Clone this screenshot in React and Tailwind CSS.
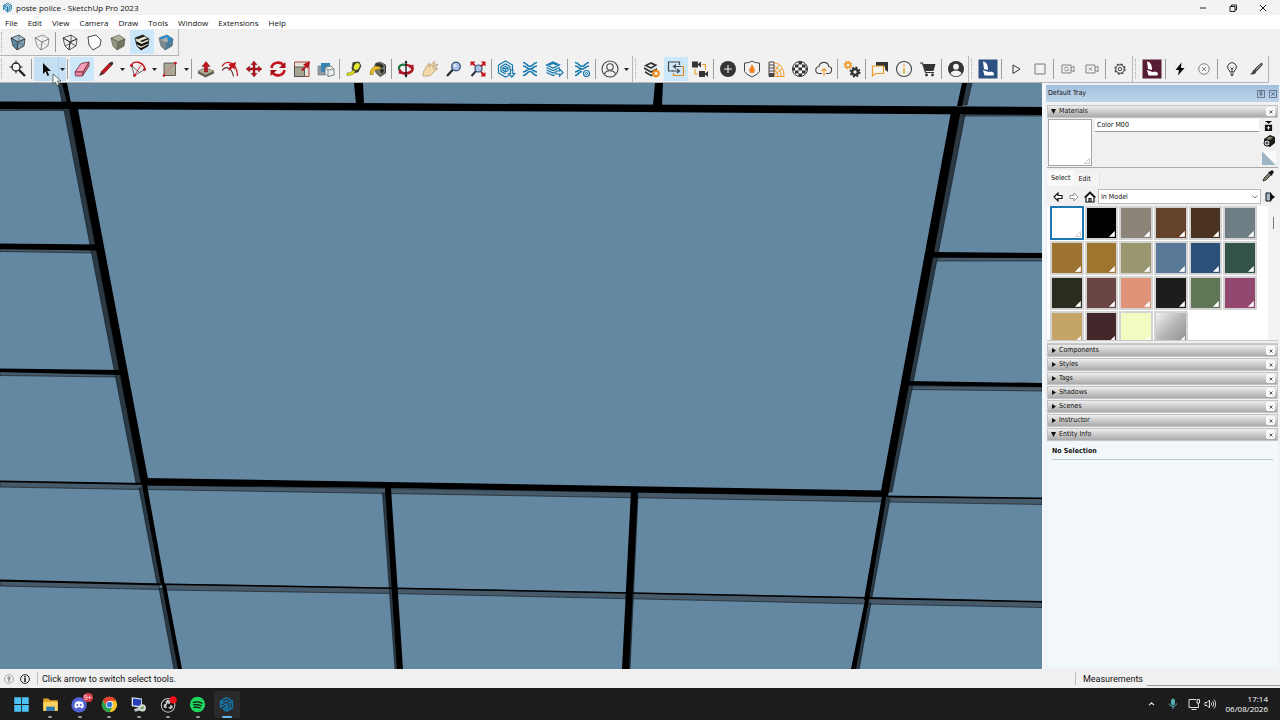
import { useState } from 'react';
import clsx from 'clsx';

const MENUS = ['File', 'Edit', 'View', 'Camera', 'Draw', 'Tools', 'Window', 'Extensions', 'Help'];

const SWATCHES = [
  '#ffffff', '#000000', '#8c8379', '#64432a', '#49321f', '#6f7d85',
  '#9c7330', '#9d752f', '#98976f', '#587a98', '#2c5179', '#315446',
  '#2a2c20', '#6b4544', '#df9479', '#1d1d1e', '#617655', '#93486f',
  '#c5a567', '#43272a', '#f3fbc3', 'metal',
];

const CLOSED_PANELS = ['Components', 'Styles', 'Tags', 'Shadows', 'Scenes', 'Instructor'];

// ── Icons ─────────────────────────────────────────────────────
// All toolbar glyphs share one 20 x 20 grid.

function Glyph({ children, className = 'size-5' }) {
  return (
    <svg viewBox="0 0 20 20" className={clsx('shrink-0', className)} fill="none" aria-hidden="true">
      {children}
    </svg>
  );
}

function SketchUpLogo({ className }) {
  return (
    <Glyph className={className}>
      <g stroke="#1478ad" strokeWidth="1.7" strokeLinejoin="round">
        <path d="M3 14.5V6l7-4 7 4v8l-7 4" />
        <path d="M3 9.5 10 5.5l4 2.4v5l-4 2.3" />
        <path d="M3 13 10 9l1 .8v2.4L6 15l4 3" />
        <path d="M10 9v9M3 6l4 2.2M14 8l3-2" />
      </g>
    </Glyph>
  );
}

const BOX = 'M4 5 12 3l5 5-1 6-7 4-4-5z';

function Cube({ top, left, right, line = '#333' }) {
  return (
    <g stroke={line} strokeWidth=".8" strokeLinejoin="round">
      <path d="M3 6 11 3l6 4-7 3z" fill={top} />
      <path d="m3 6 7 4-1 8-4-4z" fill={left} />
      <path d="m10 10 7-3-1 7-7 4z" fill={right} />
    </g>
  );
}

const ICONS = {
  xray: <><Cube top="#a9c2d0" left="#5f8aa3" right="#7fa1b5" /><path d="m5 14 6-3 5 3M11 11V3" stroke="#4c6b7c" strokeWidth=".7" /></>,
  backEdges: <><Cube top="#f7f7f7" left="#f2f2f2" right="#f2f2f2" line="#777" /><path d="m5 14 6-3 5 3M11 11V3" stroke="#999" strokeWidth=".7" strokeDasharray="1.5 1" /></>,
  wire: <><Cube top="none" left="none" right="none" /><path d="m5 14 6-3 5 3M11 11V3" stroke="#333" strokeWidth=".8" /></>,
  hidden: <path d={BOX} fill="#fcfcfc" stroke="#333" strokeWidth=".9" />,
  shaded: <Cube top="#aeb09c" left="#94967f" right="#74765f" line="#66685a" />,
  textured: (
    <>
      <path d="M3 6 11 3l6 4-1 7-7 4-4-4z" fill="#dfe2cd" stroke="#222" strokeWidth=".8" />
      <path d="m3.500 6 7.500-3 2 1.300-7.500 3zM8 9l8-3 1 1-7 3zM4 9l5.500 3 7-3-.3 2.500-7 3L4.500 12zM5 14l4 2 7-3.500V14l-7 4z" fill="#111" />
    </>
  ),
  mono: (
    <>
      <path d="m3 6 8-3 6 4-1 7-7 4-4-4z" fill="#b5ac9c" stroke="#555" strokeWidth=".7" />
      <path d="m3 6 8-3 6 4-1 7z" fill="#248dd0" />
      <path d="m10 10 7-3-1 7-7 4z" fill="#4d7d98" />
      <path d="m3 6 7 4-1 8-4-4z" fill="#7a8a92" />
      <path d="m5 8 6-3 1 5-2 0z" fill="#b9b0a1" />
    </>
  ),
  zoomSel: (
    <>
      <circle cx="8" cy="8" r="4" stroke="#222" strokeWidth="1.300" fill="#f8f8f8" />
      <path d="M8 1.500v3M8 11.500v3M1.500 8h3M11.500 8h3" stroke="#222" strokeWidth="1" />
      <path d="m11 11 6 6" stroke="#222" strokeWidth="2.400" />
    </>
  ),
  arrow: <path d="M7 4v11l2.600-2.500L11.500 17l1.700-.8-2-4.200H15z" fill="#0a0a0a" />,
  eraser: (
    <g stroke="#7c3446" strokeWidth=".9" strokeLinejoin="round">
      <path d="m3 13 6-8.500 8-1.500-6 10z" fill="#f4a0b8" />
      <path d="m3 13h8l-.500 4H3.500z" fill="#e887a4" />
      <path d="m11 13 6-10v4l-6.500 10z" fill="#c9677f" />
    </g>
  ),
  pencil: (
    <>
      <path d="m5 13 9-9.500 2.500 2L7.500 15z" fill="#c3131c" stroke="#5b1015" strokeWidth=".6" />
      <path d="m5 13 2.500 2L3 17z" fill="#222" />
      <path d="m13 4.500 2.500 2 2-2.500-1.500-1.500z" fill="#333" />
    </>
  ),
  arc: (
    <g strokeWidth="1">
      <path d="M3.500 6.500 6.500 16.500 16.500 10.500M3.500 6.500l8 7" stroke="#666" />
      <path d="M3 7C5 1 15 2 17 10" stroke="#c3131c" strokeWidth="1.300" />
      <path d="m6.500 16.500 7-11" stroke="#c3131c" strokeWidth=".8" />
      <g fill="#c3131c"><circle cx="3.500" cy="6.500" r="1.400" /><circle cx="16.500" cy="10.500" r="1.400" /><circle cx="6.500" cy="16.500" r="1.400" /></g>
    </g>
  ),
  rect: (
    <>
      <path d="M4 4h11.500v12.500H4z" fill="#aaa796" stroke="#55534a" strokeWidth=".9" />
      <path d="m4 16 11-12" stroke="#d27068" strokeWidth=".9" />
      <g fill="#c3131c"><circle cx="15.500" cy="4" r="1.300" /><circle cx="4" cy="16.500" r="1.300" /></g>
    </>
  ),
  push: (
    <>
      <path d="m2 12 7.500-3.500L18 12l-8.500 4z" fill="#b2ae98" stroke="#666454" strokeWidth=".6" />
      <path d="m2 12 7.500 4v2.500L2 14.500zM9.500 16l8.500-4v2.500l-8.500 4z" fill="#646352" />
      <path d="M8.500 13V7.500H6L10 2.500l4 5h-2.500V13z" fill="#c3131c" stroke="#7c1015" strokeWidth=".5" />
    </>
  ),
  offset: (
    <>
      <path d="M2 7.500C6 0 17 3 17.500 17" stroke="#c3131c" strokeWidth="1.300" />
      <path d="M2 11.500C6 6 12 9 13.500 17.500" stroke="#5c2a2a" strokeWidth="1.100" />
      <path d="m8 12 2-5-1.500-1.500L16 3l-1.500 7.500-1.800-1.700z" fill="#c3131c" />
    </>
  ),
  move: (
    <g fill="#b3131c" stroke="#78101a" strokeWidth=".4">
      <path d="m10 2 3 3.700H7zM10 18l3-3.700H7zM2 10l3.700-3v6zM18 10l-3.700-3v6z" />
      <path d="M9 5.500h2V9h3.500v2H11v3.500H9V11H5.500V9H9z" />
    </g>
  ),
  rotate: (
    <>
      <path d="M3.500 9C4.500 3 12.500 2 15.500 6.500M16.500 11c-1 6-9 7-12 2.500" stroke="#c3131c" strokeWidth="2.600" />
      <path d="M17.500 3v6H11zM2.500 17v-6H9z" fill="#a5121a" />
    </>
  ),
  scale: (
    <>
      <path d="M2.500 3h14.500v14.500H2.500z" fill="#e6e3d8" stroke="#9d3030" strokeWidth=".9" />
      <path d="M2.500 8h10v9.500h-10z" fill="#a6a492" stroke="#444" strokeWidth=".8" />
      <path d="m9 11 4-4-2-1.500L18 2l-2 8-1.500-2-3.500 4z" fill="#b3131c" />
    </>
  ),
  flip: (
    <>
      <path d="M2 7h7v9H2z" fill="#8f999f" stroke="#77828a" strokeWidth=".7" />
      <path d="M5 4h9v9H5z" fill="#3588b4" />
      <path d="m9 8 6-1 3 3v6l-6 1.500-3-3z" fill="#eceeee" stroke="#59646b" strokeWidth=".8" />
      <path d="m9 8 3 3v6M12 11l6-1" stroke="#59646b" strokeWidth=".7" />
    </>
  ),
  tape: (
    <>
      <path d="M9 3.500 15 3l2 4-3 6-5 1-1-5z" fill="#3c3d2f" stroke="#222" strokeWidth=".6" />
      <ellipse cx="12.700" cy="7.500" rx="2.700" ry="3.700" transform="rotate(30 12.700 7.500)" fill="#e3e834" />
      <path d="M9 11c-1 2-3 3-6 3v2.500c4 0 7-1 8-4" fill="#dede1d" stroke="#66670e" strokeWidth=".5" />
    </>
  ),
  bucket: (
    <>
      <path d="m7 6 5-3 5.500 3v8L12 17.500l-4-4z" fill="#77776b" stroke="#222" strokeWidth=".8" />
      <ellipse cx="11.500" cy="6.500" rx="4.800" ry="2.700" transform="rotate(15 11.500 6.500)" fill="#31312b" stroke="#999" strokeWidth=".6" />
      <path d="M12 11.500c1-2 3-2 4 0l-2 3.500z" fill="#25251f" />
      <path d="M11 7.500c-5-1-8.500 1.500-9 8h3c0-3 1-4 3-4.500 2-.5 4-1 5-2z" fill="#e9bd23" stroke="#856815" strokeWidth=".6" />
    </>
  ),
  orbit: (
    <>
      <path d="M4 12C1 7 5 5 10 6" stroke="#177a43" strokeWidth="2.200" />
      <path d="M10 6c7 0 8 4 5 6" stroke="#c3131c" strokeWidth="2" />
      <path d="M3.500 11c2 4.500 10 4.500 13 0" stroke="#b01826" strokeWidth="2.600" />
      <path d="m12 7.500 5.500-2v6zM8 15.500l-5.500-1 1-5z" fill="#b01826" />
      <path d="M10 3v14" stroke="#111" strokeWidth="1.300" />
      <path d="M10 1 8.500 4h3zM10 19l-1.500-3h3z" fill="#111" />
    </>
  ),
  hand: <path d="M3 17c0-3 .5-5 2-7l3.500-5.500 1.300.5L9 8l5-5.500 1 .8L12.500 8 17 5l.8 1-4.300 4 3.500-1 .5 1.200C13 12 13 15.500 9.500 17z" fill="#f1d8a8" stroke="#a58f66" strokeWidth=".7" strokeLinejoin="round" />,
  zoom: (
    <>
      <path d="m3 17 6-6.500" stroke="#28313a" strokeWidth="2.400" />
      <circle cx="12" cy="7.500" r="4.300" fill="#a9c3e8" stroke="#36506f" strokeWidth="1.300" />
      <circle cx="11" cy="6.500" r="1.500" fill="#d9e6f7" />
    </>
  ),
  extents: (
    <>
      <path d="m3.500 17 5-5.500" stroke="#28313a" strokeWidth="2" />
      <circle cx="10.500" cy="9.500" r="3.500" fill="#a9c3e8" stroke="#36506f" strokeWidth="1.200" />
      <g fill="#c3131c"><path d="M2.500 2.500h5l-1.500 1.500 1.500 2-1.300 1.300-2-1.800-1.700 1.500zM17.500 2.500v5l-1.500-1.500-2.500 2-1.300-1.300 2.300-2-1.500-2.200zM17.500 17.500h-5l1.500-1.500-1.500-2.500 1.300-1.300 2.200 2.300 1.500-1.500z" /></g>
    </>
  ),
  warehouse: (
    <g stroke="#1478ad" strokeWidth="1.200">
      <path d="M13 16.500 9.500 18 2.500 14V6l7-4 7 4v5" />
      <path d="M9.500 15 5 12.500v-5L9.500 5 14 7.500V11" />
      <path d="M7 8.800 9.500 7.500 12 8.800v2.700L9.500 13 7 11.500zM9.500 10v3M7 8.800 9.500 10 12 8.800" />
      <path d="M14.500 11v3.500h-2l3.300 3.500 3-3.500h-2V11z" fill="#f0f0f0" />
    </g>
  ),
  extWarehouse: (
    <g stroke="#1478ad" strokeWidth="1.700">
      <path d="M3 3.500c4 0 4 4 7 4s3-4 7-4M3 16.500c4 0 4-4 7-4s3 4 7 4" />
      <path d="M3 7c3.500 0 4 3 7 3s3.500-3 7-3M3 13c3.500 0 4-3 7-3s3.500 3 7 3" />
    </g>
  ),
  share: (
    <g stroke="#1478ad" strokeWidth="1.200">
      <path d="m2.500 6 6.500-3 6.500 3L9 9zM2.500 8.500 9 11.500l6.500-3M2.500 11 9 14l2-1M2.500 13.500 9 16.500l2-1M5 6l4-1.500L13 6" />
      <path d="M12 12h3.500v-2l3.500 3.500-3.500 3.500v-2H12z" fill="#f0f0f0" />
    </g>
  ),
  extManager: (
    <g stroke="#1478ad" strokeWidth="1.700">
      <path d="M3 3.500c4 0 4 4 7 4s3-4 7-4M3 7c3.500 0 4 3 7 3s3.500-3 7-3M3 13c3.500 0 4-3 7-3M3 16.500c4 0 3-4 7-4" />
      <circle cx="14.500" cy="14.500" r="3" strokeWidth="1.200" fill="#f0f0f0" /><circle cx="14.500" cy="14.500" r="1" strokeWidth="1" />
    </g>
  ),
  person: (
    <g stroke="#444" strokeWidth="1.100">
      <circle cx="10" cy="10" r="8" /><circle cx="10" cy="8" r="3.200" /><path d="M4.500 15.500c1-5 10-5 11 0" />
    </g>
  ),
  vray: (
    <>
      <path d="M2 6.500 9 3l6.500 3L9 10z" fill="#333" />
      <path d="M5.500 6.500 9 5l3 1.500L9 8z" fill="#f0f0f0" />
      <path d="m2 8 7 4 6-3v2l-4 2-2 1-7-4zM3 12l6 3.500 1.500-.5v2.300H9L3 14z" fill="#333" />
      <circle cx="14" cy="14.500" r="2.700" stroke="#ee8d1b" strokeWidth="2" />
      <path d="M14 10.500v8M10 14.500h8" stroke="#ee8d1b" strokeWidth="1" /><circle cx="14" cy="14.500" r="1.500" fill="#f0f0f0" />
    </>
  ),
  sync: (
    <g strokeWidth="1.200">
      <path d="M7 12H2.500V3h11v3" stroke="#444" /><path d="M10 7.500h7.500v9H7.500V14" stroke="#e58a20" />
      <path d="M6 12h7.500m-2.500-2 2.500 2-2.500 2M15 7.500H7.500m2.500-2-2.500 2 2.500 2" stroke="#444" />
    </g>
  ),
  cameras: (
    <>
      <path d="M2 2.500h6v6H2zM8 5l3-2.500v6L8 6zM9 12h6v6H9zM15 14.500l3-2.500v6l-3-2.500z" fill="#333" />
      <path d="M12 5.500h3.500V11M5 10v5h3" stroke="#ee9b2e" strokeWidth="1.100" />
    </>
  ),
  add: <><circle cx="10" cy="10" r="8" fill="#353535" /><path d="M10 6v8M6 10h8" stroke="#eee" strokeWidth="1.100" /></>,
  flame: (
    <>
      <path d="M10 2c2 1.500 5 2 7.500 2v8.500c-2 3-5 4-7.500 5.500-2.500-1.500-5.500-2.500-7.500-5.500V4C5 4 8 3.500 10 2z" stroke="#444" strokeWidth="1" />
      <path d="M10 5c1 2.500 2.800 4 2.800 6.200a2.800 2.800 0 0 1-5.600 0C7.200 9.500 9.300 7.500 10 5z" fill="#ee8424" />
    </>
  ),
  palette: (
    <>
      <path d="M3 3h5v14.500H3zM3 6h5M3 9h5M3 12h5" stroke="#444" strokeWidth="1" /><path d="M3 14h5v3.500H3z" fill="#444" />
      <path d="M8 4c6 0 10 5 10 13.500H8M8 8c4 0 7 4 7 9M8 12c3 0 4 2 4 5M8 14l5-8M8 16l8-6" stroke="#ee9b2e" strokeWidth="1" />
    </>
  ),
  checker: (
    <>
      <circle cx="10" cy="10" r="7.500" fill="#f7f7f7" stroke="#333" strokeWidth="1" />
      <path d="M8.500 2.500h3.500v3H8.500zM5 5.500h3.500v3H5zM12 5.500h3.500v3H12zM8.500 8.500H12v3H8.500zM2.500 8.500H5v3H2.500zM15.500 8.500h2v3h-2zM5 11.500h3.500v3H5zM12 11.500h3.500v3H12zM8.500 14.500H12v3H8.500z" fill="#333" />
    </>
  ),
  cloud: (
    <>
      <path d="M8 14.500H5.500a3.500 3.500 0 0 1-.5-7C6 2 14 2 14.800 7.500c4 .5 3.700 7-.8 7H12" stroke="#444" strokeWidth="1.100" />
      <path d="M10 17V9.500m-2.500 2.500L10 9.500l2.500 2.500" stroke="#ee9b2e" strokeWidth="1.200" />
    </>
  ),
  gears: (
    <>
      <circle cx="6" cy="6" r="2.400" stroke="#ee9b2e" strokeWidth="1.800" /><circle cx="6" cy="6" r="3.700" stroke="#ee9b2e" strokeWidth="1.200" strokeDasharray="1.500 1.400" />
      <circle cx="13" cy="13" r="3" stroke="#333" strokeWidth="2.600" /><circle cx="13" cy="13" r="4.800" stroke="#333" strokeWidth="1.400" strokeDasharray="2 1.770" />
    </>
  ),
  windows: (
    <>
      <path d="M6 3h12v10l-3-2.500V7.500H6z" fill="#333" />
      <path d="M2.500 7h11v7.500h-8l-3 2.500z" fill="#f6f3ee" stroke="#ee9b2e" strokeWidth="1.200" />
    </>
  ),
  info: <><circle cx="10" cy="10" r="7.500" stroke="#444" strokeWidth="1.100" /><path d="M10 9v5.500M10 5.500v1.800" stroke="#dfa02f" strokeWidth="1.500" /></>,
  cart: <><path d="M2 4h2.500l3 9.500H16" stroke="#333" strokeWidth="1.200" /><path d="M5 5h12.500L15.500 12h-8z" fill="#333" /><circle cx="8.500" cy="16" r="1.400" fill="#333" /><circle cx="14.500" cy="16" r="1.400" fill="#333" /></>,
  account: <><circle cx="10" cy="10" r="8" fill="#353535" /><circle cx="10" cy="7.700" r="2.900" fill="#f3f3f3" /><path d="M4.500 14.500c1.500-4 9.500-4 11 0-2.500 3.500-8.500 3.500-11 0z" fill="#f3f3f3" /></>,
  blueMark: <><path d="M.5.5h19v19H.5z" fill="#2b5081" /><path d="M5 2.500c3.500.5 5 3 5 8.500L6 10zM5 11l5.500 2c2-.5 5.500-.5 5.500 2 0 1-.7 1.500-2 1.500H6.500z" fill="#fff" /></>,
  redMark: <><path d="M.5.5h19v19H.5z" fill="#571d35" /><path d="M5 2.500c3.500.5 5 3 5 8.500L6 10zM5 11l5.500 2c2-.5 5.500-.5 5.500 2 0 1-.7 1.500-2 1.500H6.500z" fill="#fff" /></>,
  play: <path d="m7 6 7 4-7 4.500z" stroke="#333" strokeWidth="1" />,
  stop: <path d="M5 5h10v10H5z" stroke="#777" strokeWidth="1" />,
  videoSync: <g stroke="#777" strokeWidth=".9"><path d="M4 6h9v8H4zM13 9l3-2v6l-3-2M6.500 10c0-2 3-2.500 4-1M10.500 10c0 2-3 2.500-4 1" /></g>,
  videoOff: <g stroke="#777" strokeWidth=".9"><path d="M4 6h9v8H4zM13 9l3-2v6l-3-2M7 8.500l3 3M10 8.500l-3 3" /></g>,
  gear: <g stroke="#444"><circle cx="10" cy="10" r="4.200" strokeWidth="1" /><circle cx="10" cy="10" r="5" strokeWidth="1.300" strokeDasharray="2.200 1.730" /><circle cx="10" cy="10" r="1.700" strokeWidth="1" /></g>,
  bolt: <path d="M11.500 3.500 5.500 11H9l-1 5.500L14.500 9H11z" fill="#0a0a0a" />,
  cancel: <g stroke="#777" strokeWidth=".9"><circle cx="10" cy="10" r="5.300" /><path d="m8 8 4 4M12 8l-4 4" /></g>,
  bulb: <g stroke="#333" strokeWidth="1"><path d="M8 13c0-1.500-2.300-2.300-2.300-5a4.300 4.300 0 0 1 8.600 0c0 2.700-2.300 3.500-2.300 5zM8 15h4M9 16.500h2M8.500 8.500 10 10l1.500-1.500M10 10v3" /></g>,
  brush: <><path d="m9 10 6-5.500c1.500-.5 1.500.5 1 1.500L10.500 12z" fill="#888" stroke="#222" strokeWidth=".9" /><path d="M9 10.500c-3 0-2 3.500-5 4.500 3 1.500 6.500 0 6.500-3z" fill="#444" /></>,
};

const STYLE_BAR = ['xray', 'backEdges', '|', 'wire', 'hidden', 'shaded', 'textured*', 'mono'];

// '|' separator, 'v' drop-down arrow, '*' marks a pressed button
const TOOLBARS = [
  ['zoomSel', '|', 'arrow*', 'v*', '|', 'eraser*', 'pencil', 'v', 'arc', 'v', 'rect', 'v', '|',
    'push', 'offset', 'move', 'rotate', 'scale', 'flip', '|', 'tape', 'bucket', '|',
    'orbit', 'hand', 'zoom', 'extents', '|', 'warehouse', 'extWarehouse', 'share', '|', 'extManager', '|', 'person', 'v'],
  ['vray', 'sync*', 'cameras', '|', 'add', 'flame', 'palette', 'checker', 'cloud', '|', 'gears', '|',
    'windows', 'info', 'cart', '|', 'account'],
  ['blueMark', '|', 'play', 'stop', '|', 'videoSync', 'videoOff', '|', 'gear'],
  ['redMark', '|', 'bolt', 'cancel', '|', 'bulb', 'brush'],
];

function Toolbar({ items, className }) {
  return (
    <div className={clsx('flex items-center h-[27px] border-r border-b border-[#b5b5b5] bg-[#f1f1f1]', className)}>
      <span className="h-5 w-0 ml-[2px] mr-1 border-l border-dotted border-[#aaa]" />
      {items.map((item, i) => {
        const on = item.endsWith('*');
        const name = item.replace('*', '');
        if (name === '|') return <span key={i} className="w-px h-5 ml-px mr-[2px] bg-[#9b9b9b]" />;
        if (name === 'v') {
          return (
            <button key={i} aria-label="More" className={clsx('w-2 h-6 flex items-center justify-center', on && 'bg-[#c5e0f3] border-l border-[#a9d0ea]')}>
              <svg viewBox="0 0 5 3" className="w-[5px] h-[3px]"><path d="M0 0h5L2.500 3z" fill="#222" /></svg>
            </button>
          );
        }
        return (
          <button
            key={i}
            aria-label={name}
            className={clsx('w-6 h-6 flex items-center justify-center', on && (name === 'arrow' ? 'bg-[#c5e0f3]' : 'bg-[#cbe8fb]'))}
          >
            <Glyph>{ICONS[name]}</Glyph>
          </button>
        );
      })}
    </div>
  );
}

// ── Model viewport ────────────────────────────────────────────

const H = '#465a69';
const V = '#2b3944';

function Viewport() {
  return (
    <svg viewBox="0 83 1042 586" preserveAspectRatio="none" className="w-full h-full block bg-[#6487a2]" role="img" aria-label="Model view">
      {/* lit side faces of the rails */}
      <g fill={H} stroke="#10171c" strokeWidth=".6">
        <path d="M0 249 95 250v3L0 251.500zM0 371.500 118 374v3L0 375.500zM0 482 142 484v5.500L0 487zM0 581 159 584v5.500L0 586z" />
        <path d="M937 257.500h105v3.500L936 261zM912 386l130 1v4L911 389.500zM888 496.500l154 2v6L887 502zM870 598l172 4v5.500L869 604z" />
        <path d="M148 485 884 496v6L388 493.500 147 489.500zM163 584 392 588l475 10v6L392 593.500 163 590z" />
        <path d="M0 109h64v1.500H0zM963 114h79v2h-79z" />
      </g>
      <g fill={V} stroke="#10171c" strokeWidth=".6">
        <path d="M58 83h5l4 19h-5zM64 110h5l72 373h-5zM139 488h5l18 96h-5zM159 588h4l15 82h-4z" />
        <path d="m966 83-4 22h5l5-22zM959 115h6L892 492h-7zM885 499h5l-18 98h-5zM867 603h4l-12 67h-4z" />
        <path d="M382.500 493h4L399 669h-4zM634 495h4l-8 174h-4z" />
      </g>

      {/* black fronts */}
      <g fill="#000">
        <path d="M0 101.500 360 103l682 4v8l-402-3-400-2L0 109z" />
        <path d="m62 83 5 20h4l-4-20zM69 109h9l71 375h-8zM142 485h5l18 100h-4zM162 585h4l16 84h-4z" />
        <path d="M962 83h5l-5 23h-5zM951 112h9.500L888 496h-8zM882 496h4.500L869 600h-5zM865 600h4l-13 69h-5z" />
        <path d="M354 83h9l1 21h-8zM655 83h8l-1 22h-9z" />
        <path d="M142 478 388 482l496 8.500v6.500l-496-9-242-2.500z" />
        <path d="M385 488h6l12 181h-6zM631 490h7l-9 179h-7z" />
        <path d="M0 243.500 97 244.500v6L0 249zM0 368.500 121 370v5L0 372zM0 480.500 146 483v2L0 482zM0 579.500 163 583.500v2L0 581.500z" />
        <path d="M930 252l112 1v5l-112-.5zM907 381l135 2v4l-135-1.500zM884 495.500l158 2v1.500l-158-1.500zM866 597l176 4v1.500l-176-3.500z" />
        <path d="M163 583.500 392 587.500 866 597v1.500L392 589 163 585z" />
      </g>
    </svg>
  );
}

// ── Tray ──────────────────────────────────────────────────────

function PanelHeader({ title, open }) {
  return (
    <div className="flex items-center h-[13px] mb-px shrink-0 border border-[#c4c4c4] bg-linear-to-b from-[#ededed] to-[#aaaaaa] pl-[3px] pr-[2px]">
      <button className="flex flex-1 items-center gap-[3px] text-left">
        <svg viewBox="0 0 5 5" className="size-[5px]" aria-hidden="true">
          <path d={open ? 'M0 0h5L2.500 5z' : 'M1 0v5L5 2.500z'} fill="#111" />
        </svg>
        <span className="leading-[11px]">{title}</span>
      </button>
      <button aria-label={`Close ${title}`} className="size-[9px] rounded-[2px] bg-[#fbfbfb] flex items-center justify-center">
        <svg viewBox="0 0 4 4" className="size-1"><path d="m.5.5 3 3m0-3-3 3" stroke="#333" strokeWidth=".8" /></svg>
      </button>
    </div>
  );
}

function Swatch({ color, selected, onClick }) {
  const white = color === '#ffffff';
  return (
    <button
      onClick={onClick}
      aria-label={color}
      style={color === 'metal' ? undefined : { backgroundColor: color }}
      className={clsx(
        'h-[34px] flex items-end justify-end p-px border-2',
        selected ? 'border-[#1e77b3]' : 'border-[#d3d3d3]',
        color === 'metal' && 'bg-linear-to-br from-[#f2f2f2] via-[#b5b5b5] to-[#8d8d8d]',
      )}
    >
      <svg viewBox="0 0 6 6" className="size-[6px]"><path d="M5.500.5v5h-5z" fill="#fff" stroke={white ? '#b5b5b5' : '#fff'} strokeWidth=".6" /></svg>
    </button>
  );
}

function Materials() {
  const [active, setActive] = useState(0);
  const [name, setName] = useState('Color M00');
  return (
    <section className="shrink-0 bg-[#f0f0f0]">
      <div className="flex h-[49px] border-b border-[#aaa] mb-[2px]">
        <div className="w-11 h-[47px] ml-px border border-[#a5a5a5] bg-white flex items-end justify-end p-px">
          <svg viewBox="0 0 6 6" className="size-[6px]"><path d="M5.500.5v5h-5z" stroke="#aaa" fill="none" strokeWidth=".6" /></svg>
        </div>
        <input
          aria-label="Material name"
          value={name}
          onChange={(e) => setName(e.target.value)}
          className="flex-1 min-w-0 h-[13px] ml-[3px] px-[2px] bg-white border-b border-[#999] outline-none"
        />
        <div className="w-[19px] flex flex-col items-center gap-1 pt-[2px]">
          <button aria-label="Secondary pane">
            <svg viewBox="0 0 10 11" className="w-[9px] h-[10px]"><path d="M1 0h8L5 3zM1 4h8v7H1z" fill="#111" /><path d="M5 5.500v4M3 7.500h4" stroke="#fff" /></svg>
          </button>
          <button aria-label="Create material">
            <svg viewBox="0 0 12 12" className="size-3"><path d="M1 4 7 0l5 2v6l-5 4-6-2z" fill="#1c1c14" /><path d="m3 4 4-2.500 3 1L6.500 5z" fill="#85857a" /><circle cx="4" cy="8" r="3" fill="#eee" stroke="#111" /><path d="M4 6.500v3M2.500 8h3" stroke="#111" /></svg>
          </button>
          <button aria-label="Default material">
            <svg viewBox="0 0 14 14" className="size-[14px]"><path d="M0 0v14h14z" fill="#9db4c5" /><path d="M0 0h14v14z" fill="#fafafa" /></svg>
          </button>
        </div>
      </div>

      <div className="flex items-end h-4 pr-1">
        <button className="h-4 px-1 bg-[#f9f9f9]">Select</button>
        <button className="h-[13px] pl-1 pr-2 bg-[#f4f4f4] border-r border-[#e2e2e2]">Edit</button>
        <button aria-label="Sample paint" className="ml-auto self-start">
          <svg viewBox="0 0 12 12" className="size-3"><path d="m1 11 1-3 5-5 2 2-5 5z" fill="#7b7c68" stroke="#222" strokeWidth=".8" /><path d="m6 2 4 4 .5-2L12 2l-2-2-2 1.500z" fill="#111" /></svg>
        </button>
      </div>

      <div className="flex items-center h-[19px] mt-px gap-1 pl-[6px] pr-[3px]">
        <button aria-label="Back"><svg viewBox="0 0 10 10" className="size-[10px]" fill="#fff"><path d="m1 5 4-4v2.500h4v3H5V9z" stroke="#111" strokeWidth="1.100" /></svg></button>
        <button aria-label="Forward" className="ml-[2px]"><svg viewBox="0 0 10 10" className="size-[10px]" fill="#fff"><path d="M9 5 5 1v2.500H1v3h4V9z" stroke="#999" /></svg></button>
        <button aria-label="In model" className="ml-px"><svg viewBox="0 0 12 12" className="size-3"><path d="M2 6v5h8V6L6 2z" fill="#fff" stroke="#111" strokeWidth="1.200" /><path d="M.5 6.500 6 1l5.500 5.500M5 11V7.500h2V11" fill="none" stroke="#111" strokeWidth="1.200" /></svg></button>
        <div className="relative flex-1 -ml-[2px]">
          <select aria-label="Library" className="appearance-none w-full h-[15px] pl-[2px] bg-white border border-[#bbb] block leading-[12px]">
            <option>In Model</option>
          </select>
          <svg viewBox="0 0 6 4" className="absolute right-[3px] top-[6px] w-[6px] h-1 pointer-events-none"><path d="m.5.5 2.500 2.500L5.500.5" stroke="#555" fill="none" strokeWidth=".8" /></svg>
        </div>
        <button aria-label="Details"><svg viewBox="0 0 10 10" className="size-[10px]"><path d="M1 1h5v8H1z" fill="#a5b8c8" stroke="#111" /><path d="M5 1v8l5-4z" fill="#111" /></svg></button>
      </div>

      <div className="flex h-[134px] bg-white">
        <div className="flex-1 grid grid-cols-6 gap-px content-start overflow-hidden pl-[3px] pr-[11px]">
          {SWATCHES.map((c, i) => <Swatch key={i} color={c} selected={i === active} onClick={() => setActive(i)} />)}
        </div>
        <div className="w-[10px] bg-[#f3f3f3] flex justify-center pt-[11px]">
          <div className="w-px h-3 bg-[#777]" />
        </div>
      </div>
      <div className="h-1 border-y border-[#c9c9c9] bg-[#eee]" />
    </section>
  );
}

function Tray() {
  return (
    <aside className="w-[238px] shrink-0 flex flex-col border-l-3 border-[#f5f7f9] bg-[#eef2f6] px-[2px] pb-[2px] text-[7px] leading-[11px] text-[#111] font-['DejaVu_Sans_Condensed','DejaVu_Sans',sans-serif]">
      <header className="-mx-px mt-[2px] mb-[3px] h-[17px] flex items-center gap-1 px-[2px] bg-linear-to-b from-[#a3bfdc] to-[#bfd4ea]">
        <span className="flex-1">Default Tray</span>
        {['M3 2h3M3.500 2v2.500M5.500 2v2.500M2.500 5h4M4.500 5v2', 'm2.500 2.500 4 4m0-4-4 4'].map((d, i) => (
          <button key={d} aria-label={i ? 'Close tray' : 'Pin tray'}>
            <svg viewBox="0 0 9 9" className="size-2" fill="none" stroke="#4b6076" strokeWidth=".9"><path d="M.5.5h8v8h-8z" /><path d={d} /></svg>
          </button>
        ))}
      </header>
      <PanelHeader title="Materials" open />
      <Materials />
      {CLOSED_PANELS.map((p) => <PanelHeader key={p} title={p} />)}
      <PanelHeader title="Entity Info" open />
      <section className="flex-1 bg-[#f2f8fa] px-[5px] pt-1">
        <p className="font-bold pb-[2px] border-b border-[#bccac9]">No Selection</p>
      </section>
    </aside>
  );
}

// ── Taskbar ───────────────────────────────────────────────────

const APPS = {
  Start: <g fill="#4cc3f5"><path d="M1.500 1.500h8v8h-8zM10.500 1.500h8v8h-8zM1.500 10.500h8v8h-8zM10.500 10.500h8v8h-8z" /></g>,
  Files: <><path d="M1.500 3h6l2 2h9v12h-17z" fill="#e2a52b" /><path d="M1.500 7h17v10.500h-17z" fill="#fbd35f" /><path d="M5 12.500h10v5H5z" fill="#2b78b8" /></>,
  Discord: (
    <>
      <circle cx="9.500" cy="10.500" r="9" fill="#5364d6" />
      <path d="M5.500 7c2-1 6-1 8 0 1 2 1.700 4 1.500 6-1 1-2 1.300-3 1.500l-.7-1.200H7.700L7 14.500c-1-.2-2-.5-3-1.500-.2-2 .5-4 1.500-6z" fill="#fff" />
      <circle cx="7.500" cy="10.500" r="1.200" fill="#5364d6" /><circle cx="11.500" cy="10.500" r="1.200" fill="#5364d6" />
    </>
  ),
  Chrome: (
    <>
      <circle cx="10" cy="10" r="9" fill="#f8c62a" />
      <path d="M2.200 5.500A9 9 0 0 1 17.800 5.500H10L6.400 12.100z" fill="#e24033" />
      <path d="M2.200 5.500A9 9 0 0 0 10 19L13.600 12.100H6.400z" fill="#26a352" />
      <circle cx="10" cy="10" r="4.200" fill="#fff" /><circle cx="10" cy="10" r="3.300" fill="#3477df" />
    </>
  ),
  Remote: <><path d="m2 1.500 12 1.500v11L2 12z" fill="#e9edf8" /><path d="m3.500 3 9.500 1.200v8L3.500 11z" fill="#2740b9" /><path d="m4.500 15.500 6-2 2 3-6 2z" fill="#c5cad2" /><circle cx="14.500" cy="14" r="4.200" fill="#d4dbcf" /><path d="m12.500 15.500 4-3m-3 0 2 3" stroke="#3b8138" /></>,
  OBS: <><circle cx="9.500" cy="11" r="8" fill="#161616" stroke="#c5c5c5" strokeWidth="1.200" /><g fill="#c5c5c5"><path d="M9 4.500c3 0 4 3 2 5.500-1-1.500-3-1.500-3 .5C6 9 6 5.500 9 4.500zM15 13c-1 3-4 3-5.500 0 2 .5 3-1 2.500-2.500 2 0 3.500 1 3 2.500zM4.500 13c-1-3 1-4.500 4-3-1.500 1-1.500 2.500 0 3.500-1.500 1.500-3.500 1-4-.5z" /></g><circle cx="15.500" cy="4.500" r="4.300" fill="#f20d18" /></>,
  Spotify: <><circle cx="10" cy="10" r="9" fill="#20d661" /><path d="M5 7.500c3.500-1 7-.7 10.300 1M5.500 10.500c3-.8 6-.5 8.700 1M6 13.300c2.500-.6 5-.3 7 .8" stroke="#111" strokeWidth="1.500" strokeLinecap="round" /></>,
};

function Taskbar() {
  return (
    <footer className="h-8 shrink-0 flex items-center bg-[#1c1c1c] pl-2 pr-3 text-white">
      <nav className="flex justify-between w-[232px]">
        {Object.entries(APPS).map(([name, art], i) => (
          <button key={name} aria-label={name} className="relative w-[26px] h-[27px] flex flex-col items-center justify-center">
            <Glyph className="size-[17px]">{art}</Glyph>
            {name === 'Discord' && (
              <span className="absolute top-[2px] right-0 h-[9px] px-px rounded-full bg-[#d93c48] text-[7px] leading-[9px] font-['Open_Sans',sans-serif]">9+</span>
            )}
            {i > 0 && <span className="absolute bottom-0 w-1 h-[2px] rounded bg-[#999]" />}
          </button>
        ))}
        <button aria-label="SketchUp" className="relative w-[26px] h-[27px] flex items-center justify-center rounded-[3px] bg-[#2a2a2a]">
          <SketchUpLogo className="size-[17px]" />
          <span className="absolute bottom-0 w-[10px] h-[2px] rounded bg-[#62bbe8]" />
        </button>
      </nav>

      <div className="ml-auto flex items-center gap-[10px]">
        <button aria-label="Hidden icons"><svg viewBox="0 0 8 5" className="w-[7px] h-1" fill="none" stroke="#eee" strokeWidth="1.300"><path d="m1 4 3-3 3 3" /></svg></button>
        <button aria-label="Microphone" className="ml-[3px]"><svg viewBox="0 0 10 12" className="w-[10px] h-3" fill="none" stroke="#55aeb4"><rect x="3.500" y="1" width="3" height="6" rx="1.500" fill="#55aeb4" /><path d="M1.500 5.500c0 4 7 4 7 0M5 8.500V11" /></svg></button>
        <div className="flex items-center gap-1">
          <svg viewBox="0 0 12 12" className="size-3" fill="none" stroke="#ddd" aria-hidden="true"><path d="M8 1.500H1v8h9.500V7M3.500 11.500h5M9 1.500h2.500V5H9zM10.200 5v2" /></svg>
          <svg viewBox="0 0 12 12" className="size-3" fill="none" stroke="#ddd" aria-hidden="true"><path d="M1 4.500h2L5.500 2v8L3 7.500H1zM7 4.500c.8 1 .8 2 0 3M8.500 3c1.500 2 1.500 4 0 6M10 1.500c2.200 3 2.200 6 0 9" /></svg>
        </div>
        <div className="text-right text-[8px] leading-[10px] font-['Open_Sans',sans-serif]">
          <p>17:14</p>
          <p>06/08/2026</p>
        </div>
      </div>
    </footer>
  );
}

export default function App() {
  return (
    <div className="h-screen flex flex-col overflow-hidden bg-[#f0f0f0] text-[#111] font-['Open_Sans','Noto_Sans',sans-serif]">
      <header className="h-[15px] shrink-0 flex items-center bg-[#f3f3f3] pl-[2px] pr-[2px]">
        <SketchUpLogo className="size-[11px]" />
        <h1 className="flex-1 pl-[3px] text-[8px] leading-[14px]">poste police - SketchUp Pro 2023</h1>
        {['M2 5h6', 'M2 3.500h5v5H2zM3.500 3.500V2h5v5H7', 'm2 2 6 6m0-6-6 6'].map((d, i) => (
          <button key={d} aria-label={['Minimize', 'Restore', 'Close'][i]} className="w-[30px] h-[15px] flex items-center justify-center">
            <svg viewBox="0 0 10 10" className="size-[10px]" fill="none" stroke="#222"><path d={d} /></svg>
          </button>
        ))}
      </header>

      <nav className="h-[14px] shrink-0 flex items-center bg-white text-[8px] leading-[14px]">
        {MENUS.map((m) => <button key={m} className="px-[5px] pt-px">{m}</button>)}
      </nav>

      <div className="relative shrink-0">
        <div className="flex -ml-px"><Toolbar items={STYLE_BAR} /></div>
        <div className="flex -ml-px">
          {TOOLBARS.map((items, i) => <Toolbar key={i} items={items} className={i === 0 && 'pr-[2px]'} />)}
        </div>
        {/* mouse pointer */}
        <svg viewBox="0 0 10 14" className="absolute left-[52px] top-[44px] w-[10px] h-[14px] z-10 pointer-events-none" aria-hidden="true">
          <path d="M1 1v10l2.500-2L5 12.500l2-1L5.500 8H9z" fill="#fff" stroke="#3b5146" strokeWidth=".8" />
        </svg>
      </div>

      <main className="flex flex-1 min-h-0">
        <div className="flex-1 min-w-0"><Viewport /></div>
        <Tray />
      </main>

      <div className="h-[19px] shrink-0 flex items-center pl-1 bg-[#f0f0f0] text-[9px] leading-[14px] font-['Roboto','Open_Sans',sans-serif]">
        <svg viewBox="0 0 10 10" className="size-[10px]" fill="none" stroke="#aaa" aria-hidden="true"><circle cx="5" cy="5" r="4.400" /><circle cx="5" cy="4" r="1.200" stroke="#777" /><path d="M5 5v3" stroke="#777" /></svg>
        <svg viewBox="0 0 10 10" className="size-[10px] ml-[6px]" fill="none" stroke="#222" aria-hidden="true"><circle cx="5" cy="5" r="4.400" /><path d="M5 2v1.500M5 4v4" strokeWidth="1.600" /></svg>
        <span className="w-px h-[13px] bg-[#bbb] ml-[7px] mr-1" />
        <p className="flex-1 pt-px">Click arrow to switch select tools.</p>
        <span className="w-px h-[13px] bg-[#bbb]" />
        <label htmlFor="vcb" className="pl-[7px] pr-1 pt-px">Measurements</label>
        <input id="vcb" className="w-[133px] h-[15px] bg-transparent border-b border-[#999] outline-none" />
      </div>

      <Taskbar />
    </div>
  );
}
